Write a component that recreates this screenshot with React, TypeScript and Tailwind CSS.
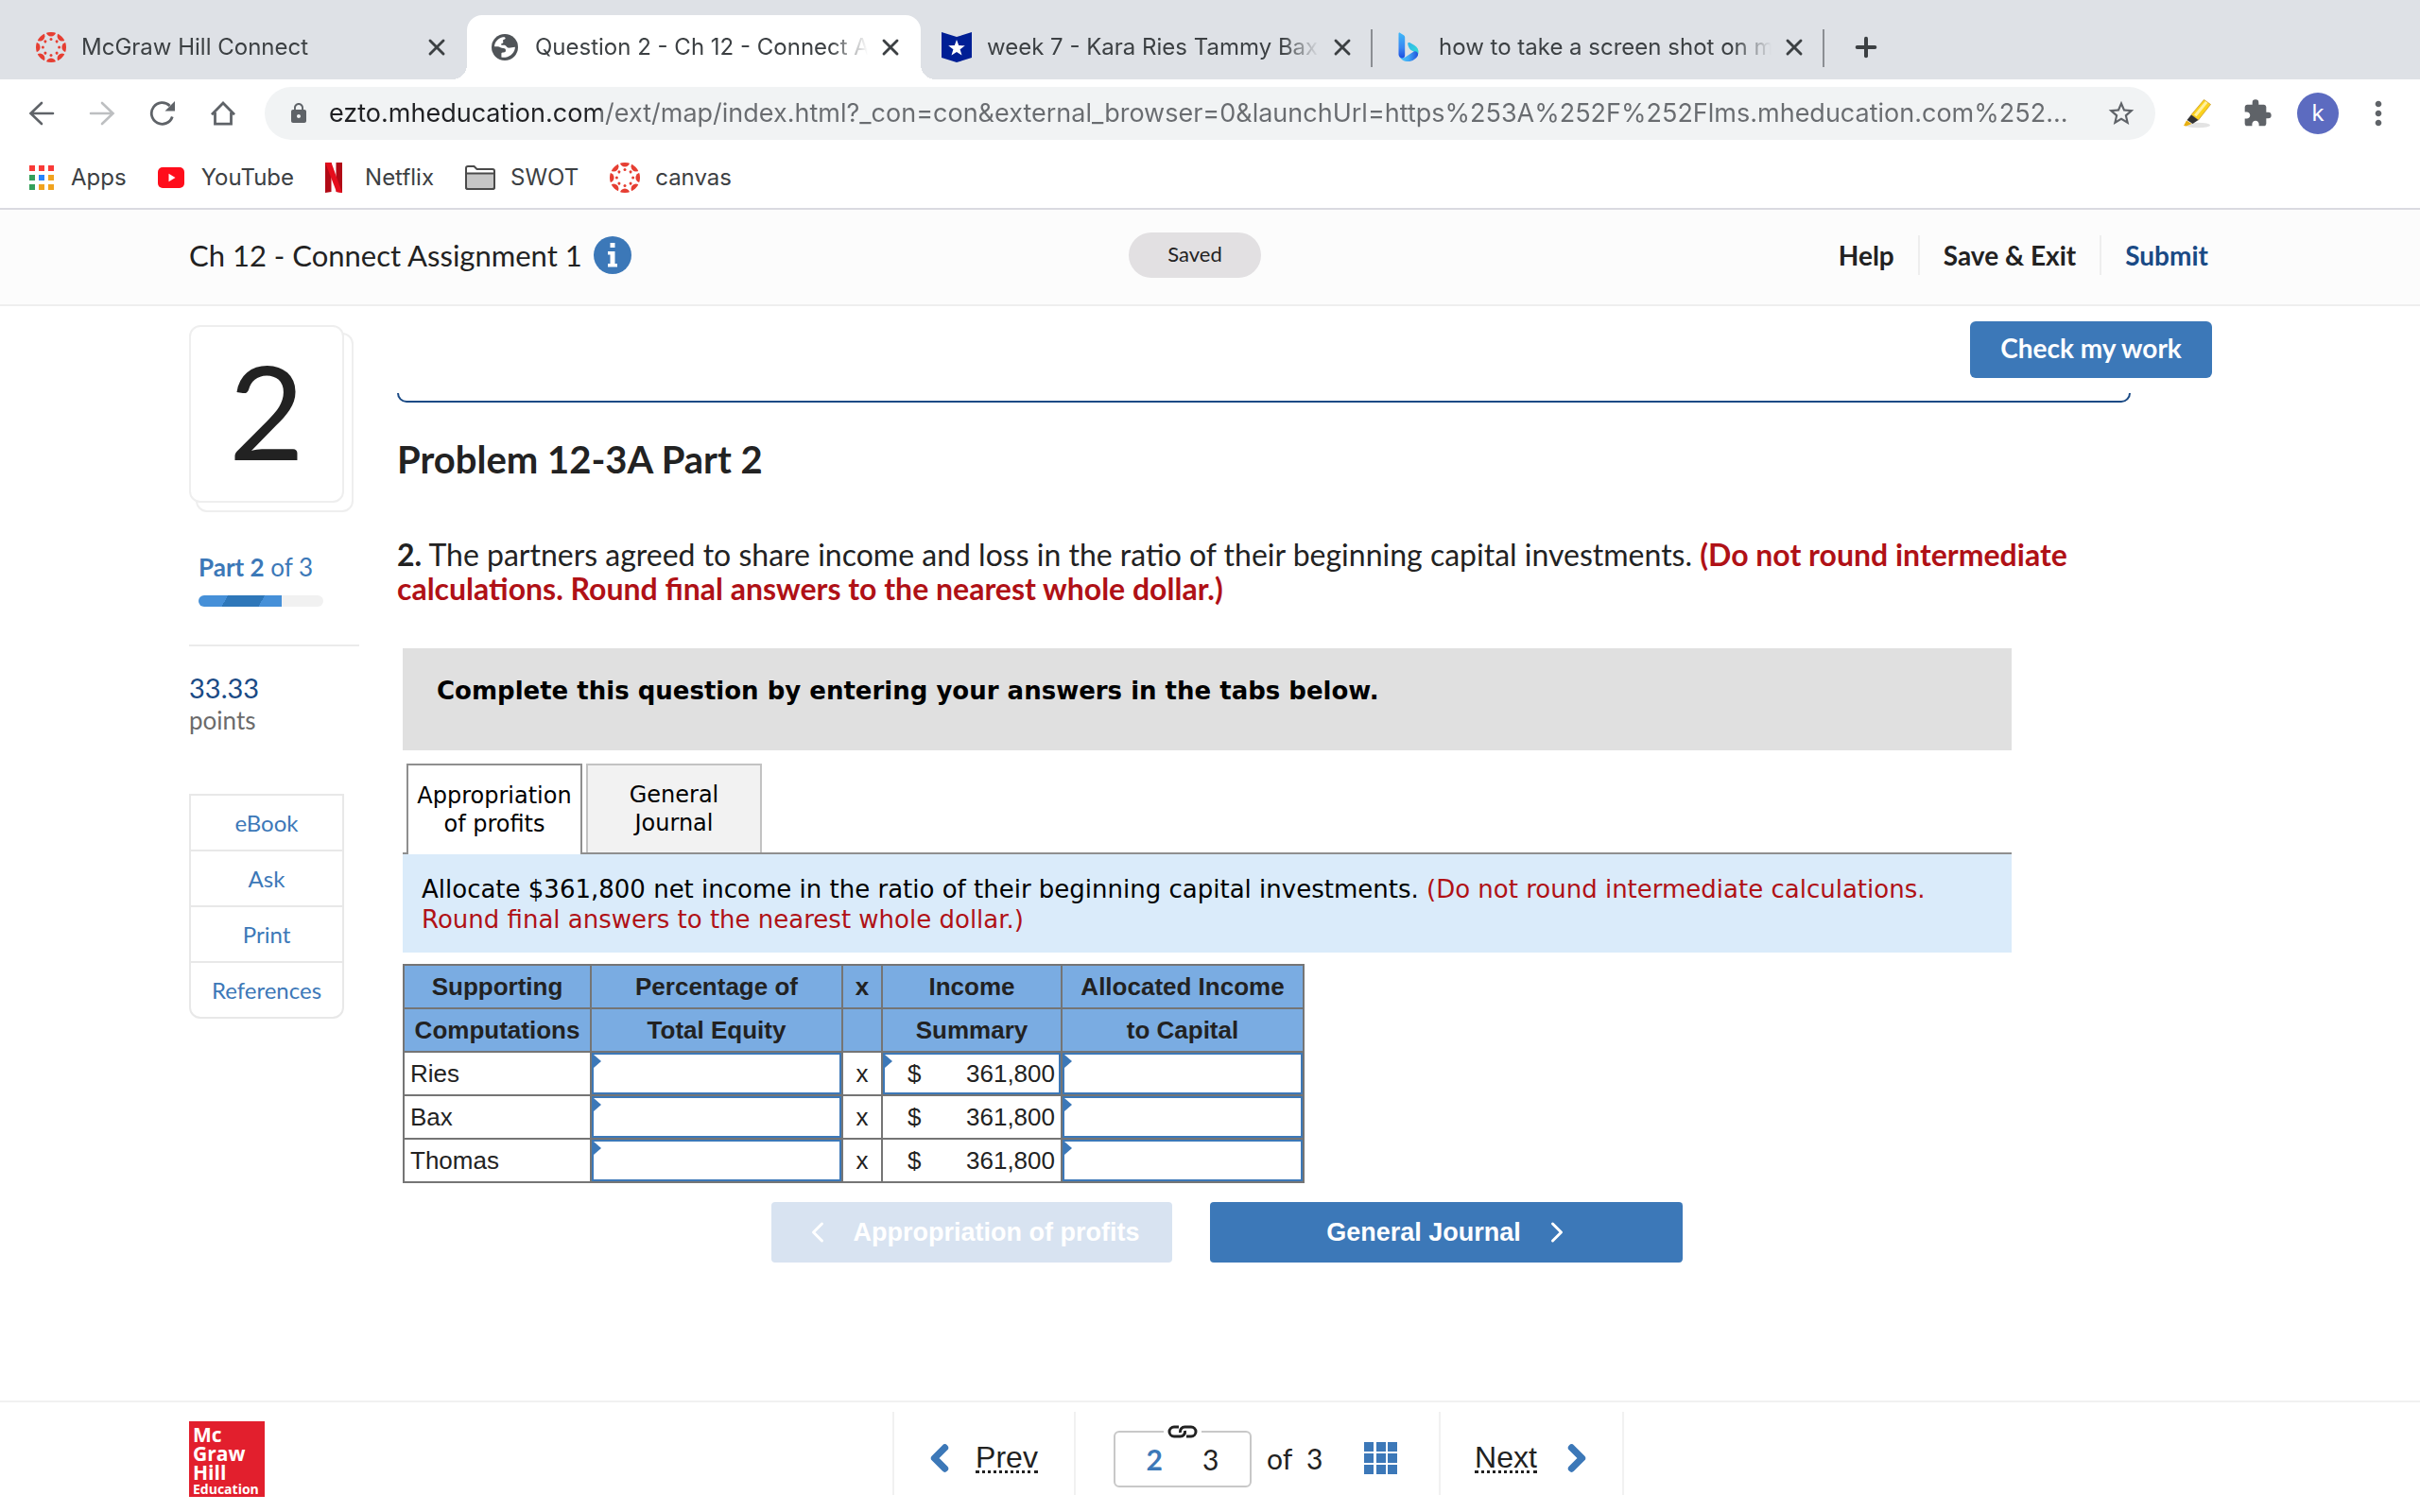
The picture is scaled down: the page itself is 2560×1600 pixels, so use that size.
import { ChevronLeft, ChevronRight, Plus, X } from 'lucide-react';
import { MdLock, MdMoreVert, MdStarBorder, MdExtension } from 'react-icons/md';

const angles = [0, 45, 90, 135, 180, 225, 270, 315];

function CanvasIcon() {
  return (
    <svg viewBox="0 0 32 32" className="size-8 shrink-0">
      <clipPath id="canvas-disc">
        <circle cx="16" cy="16" r="16" />
      </clipPath>
      <g fill="#e63e32" clipPath="url(#canvas-disc)">
        {angles.map((a) => (
          <g key={a} transform={`rotate(${a} 16 16)`}>
            <circle cx="16" cy="-0.6" r="5.2" />
            <circle cx="16" cy="7.4" r="1.5" />
          </g>
        ))}
      </g>
    </svg>
  );
}

function GlobeIcon() {
  return (
    <svg viewBox="0 0 28 28" className="size-7 shrink-0">
      <circle cx="14" cy="14" r="14" fill="#505458" />
      <path
        fill="#fff"
        d="M3 13.2C3.4 8.2 7.2 4.2 12 3.3c1.600-.3 3 .2 2.600 1.500-.4 1.100-2.600 1-2.600 2.300 0 1 .8 1.300.2 2.200-.5.8-2.100.6-2.100 1.600 0 .9 1.800.8 3.200.8 2.200 0 2.400 2.600 4.600 2.900 2 .2 4.300-.6 7-.8-.1 5.200-4.200 10-10.200 10.900-1.200.1-3.200.1-4.300-.3v-3.600c0-1.200 1-1.300 2.400-1.300 1.400 0 2.200-.8 2.200-2.200 0-1.500-1-2.200-2.600-2.200-2.400 0-3.600-1.900-6-1.900z"
      />
    </svg>
  );
}

function FlagIcon() {
  return (
    <svg viewBox="0 0 32 32" className="size-8 shrink-0">
      <path fill="#001f95" d="M0 0l16 5L32 0v27l-16 5L0 27z" />
      <path fill="#fff" d="M16 8l2.200 6.100 6.600.2-5.200 4 1.900 6.300-5.500-3.700-5.500 3.700 1.900-6.300-5.200-4 6.600-.2z" />
    </svg>
  );
}

function BingIcon() {
  return (
    <svg viewBox="0 0 22 32" className="h-8 w-[22px] shrink-0">
      <defs>
        <linearGradient id="bing-stem" x1="0" y1="0" x2="0" y2="1">
          <stop offset="0" stopColor="#3fb8f8" />
          <stop offset="0.6" stopColor="#3a86f2" />
          <stop offset="1" stopColor="#1b4de0" />
        </linearGradient>
        <linearGradient id="bing-base" x1="0" y1="0" x2="1" y2="0">
          <stop offset="0" stopColor="#4ccbfa" />
          <stop offset="0.5" stopColor="#3fa8f5" />
          <stop offset="1" stopColor="#2350dd" />
        </linearGradient>
        <linearGradient id="bing-wing" x1="0" y1="0" x2="1" y2="1">
          <stop offset="0" stopColor="#2fb4ee" />
          <stop offset="1" stopColor="#35e0cf" />
        </linearGradient>
      </defs>
      <path fill="url(#bing-wing)" d="M10.200 12.200c0-1.200 1-1.600 2-1.100l4.800 2.600c3.500 2 5 5 4.500 9l-1.500 3-1.600-4.200-5-2.600c-1.800-2-3-4.400-3.200-6.700z" />
      <path fill="url(#bing-base)" d="M1 24c1 2.500 4 4 6.500 2.600L17 20.300c2.600-.6 4.500 1.500 4 4C19.500 28.500 14 31.800 9 31c-4.500-.6-7.500-3.500-8-7z" />
      <path fill="url(#bing-stem)" d="M.5 1.700C.5.700 1.500.3 2.300.9L6 3.300c.8.500 1.200 1.200 1.200 2.200v19.300c0 1.600-1.200 2.600-2.800 2.600-2.300 0-3.900-1.800-3.900-4z" />
    </svg>
  );
}

function ReloadIcon() {
  return (
    <svg viewBox="0 0 28 28" className="size-7">
      <path d="M24.300 17.500A11.300 11.300 0 1 1 21.600 6" fill="none" stroke="#5f6368" strokeWidth="2.800" />
      <path d="M27 1v10.500H16.500z" fill="#5f6368" />
    </svg>
  );
}

function HomeIcon() {
  return (
    <svg viewBox="0 0 28 28" className="size-7" fill="none" stroke="#5f6368" strokeWidth="2.800">
      <path d="M2 15.200L14 3l12 12.200" />
      <path d="M5.500 13v12.200h17V13" />
    </svg>
  );
}

function ArrowIcon({ flip = false, color }: { flip?: boolean; color: string }) {
  return (
    <svg viewBox="0 0 28 28" className="size-7" fill="none" stroke={color} strokeWidth="2.600" strokeLinecap="round">
      {flip ? <path d="M2 14h23M14 3l11.500 11L14 25" /> : <path d="M26 14H3M14 3L2.500 14 14 25" />}
    </svg>
  );
}

function MarkerIcon() {
  return (
    <svg viewBox="0 0 32 32" className="size-8">
      <ellipse cx="17" cy="28.500" rx="13" ry="2.800" fill="#e3e3e3" />
      <path d="M10 17.500L23.500 1.500l7 5L17.500 23z" fill="#fbd21c" stroke="#c99b2a" strokeWidth="0.800" />
      <path d="M13 17.500L25 3l2.500 1.800L15.500 19.300z" fill="#fff0a0" />
      <path d="M10 17.500l7.500 5.500-6 4-6-4z" fill="#333" />
      <path d="M5 23.500l5.500 3.500-6 2.500L2 29z" fill="#e8b012" />
    </svg>
  );
}

function AppsIcon() {
  const colors = ['#f93a37', '#f93a37', '#f93a37', '#34a05a', '#2684fc', '#f0a31f', '#34a05a', '#f0a31f', '#f0a31f'];
  return (
    <span className="grid size-[26px] grid-cols-3 gap-1">
      {colors.map((c, i) => (
        <span key={i} style={{ background: c }} />
      ))}
    </span>
  );
}

function YouTubeIcon() {
  return (
    <svg viewBox="0 0 28 22" className="h-[22px] w-7">
      <rect width="28" height="22" rx="5" fill="#ff0d1b" />
      <path d="M11.500 6.800v8.400l7-4.200z" fill="#fff" />
    </svg>
  );
}

function NetflixIcon() {
  return (
    <svg viewBox="0 0 18 32" className="h-8 w-[18px]">
      <path d="M0 0h6.500v31L0 32zM11.500 0H18v32l-6.500-1z" fill="#b10a16" />
      <path d="M0 0h6.500L18 32l-6-1z" fill="#e50d1c" />
    </svg>
  );
}

function FolderIcon() {
  return (
    <svg viewBox="0 0 32 26" className="h-[26px] w-8" stroke="#4a4a4a" strokeWidth="2">
      <path d="M1 3a2 2 0 0 1 2-2h6.500l3 3H29a2 2 0 0 1 2 2v17a2 2 0 0 1-2 2H3a2 2 0 0 1-2-2z" fill="#fff" />
      <path d="M1 8.500h30V23a2 2 0 0 1-2 2H3a2 2 0 0 1-2-2z" fill="#c6c6c6" />
    </svg>
  );
}

function LinkIcon() {
  return (
    <svg viewBox="0 0 32 14" className="h-3.5 w-8" fill="none" stroke="#222" strokeWidth="3">
      <path d="M12 2H7a5 5 0 0 0 0 10h6.500A5 5 0 0 0 18.500 6" />
      <path d="M20 12h5a5 5 0 0 0 0-10h-6.500a5 5 0 0 0-5 6" />
    </svg>
  );
}

interface TabProps {
  icon: React.ReactNode;
  title: string;
  active?: boolean;
  divider?: boolean;
}

function BrowserTab({ icon, title, active, divider }: TabProps) {
  return (
    <div
      className={
        active
          ? 'relative flex h-[68px] w-[480px] items-center rounded-t-2xl bg-white pr-5 pl-6'
          : 'relative flex h-[68px] w-[478px] items-center pr-5 pl-[22px]'
      }
    >
      {active && (
        <>
          <span className="absolute bottom-0 -left-4 size-4 bg-[radial-gradient(circle_at_0_0,transparent_16px,white_16px)]" />
          <span className="absolute -right-4 bottom-0 size-4 bg-[radial-gradient(circle_at_100%_0,transparent_16px,white_16px)]" />
        </>
      )}
      <span className="flex w-8 shrink-0 justify-center">{icon}</span>
      <span className="ml-4 flex-1 overflow-hidden text-2xl whitespace-nowrap text-[#3c4043] [mask-image:linear-gradient(90deg,black_calc(100%-40px),transparent)]">
        {title}
      </span>
      <button aria-label="Close tab" className="ml-3 flex size-6 items-center justify-center text-[#3c4043]">
        <X className="size-7 shrink-0" strokeWidth={2.5} />
      </button>
      {divider && <span className="absolute top-[15px] right-0 h-10 w-0.5 bg-[#8b8e93]" />}
    </div>
  );
}

const bookmarks = [
  { name: 'Apps', icon: <AppsIcon />, gap: 'gap-[18px]' },
  { name: 'YouTube', icon: <YouTubeIcon />, gap: 'gap-[18px]' },
  { name: 'Netflix', icon: <NetflixIcon />, gap: 'gap-6' },
  { name: 'SWOT', icon: <FolderIcon />, gap: 'gap-4' },
  { name: 'canvas', icon: <CanvasIcon />, gap: 'gap-4' },
];

function BrowserChrome() {
  return (
    <div className="border-b-2 border-[#dadae0] bg-white font-['Inter',sans-serif]">
      <div className="flex h-[84px] items-end bg-[#dee1e6] pl-4">
        <BrowserTab icon={<CanvasIcon />} title="McGraw Hill Connect" />
        <BrowserTab icon={<GlobeIcon />} title="Question 2 - Ch 12 - Connect A" active />
        <BrowserTab icon={<FlagIcon />} title="week 7 - Kara Ries Tammy Bax" divider />
        <BrowserTab icon={<BingIcon />} title="how to take a screen shot on m" divider />
        <button aria-label="New tab" className="ml-7 flex h-[68px] items-center text-[#3c4043]">
          <Plus className="size-8" strokeWidth={3} />
        </button>
      </div>
      <div className="flex h-[72px] items-center pr-6 pl-[30px]">
        <div className="flex gap-9">
          <button aria-label="Back"><ArrowIcon color="#5f6368" /></button>
          <button aria-label="Forward"><ArrowIcon flip color="#bdbfc1" /></button>
          <button aria-label="Reload"><ReloadIcon /></button>
          <button aria-label="Home"><HomeIcon /></button>
        </div>
        <div className="ml-[30px] flex h-14 flex-1 items-center rounded-full bg-[#f1f3f4] pr-5 pl-6">
          <MdLock className="size-6 text-[#5f6368]" />
          <input
            aria-label="Address"
            readOnly
            defaultValue="ezto.mheducation.com/ext/map/index.html?_con=con&external_browser=0&launchUrl=https%253A%252F%252Flms.mheducation.com%252..."
            className="ml-5 min-w-0 flex-1 bg-[linear-gradient(90deg,#202124_288px,#696c70_288px)] bg-clip-text text-[27px] text-transparent outline-none"
          />
          <button aria-label="Bookmark this page"><MdStarBorder className="size-8 text-[#5f6368]" /></button>
        </div>
        <div className="ml-7 flex items-center">
          <MarkerIcon />
          <MdExtension className="ml-8 size-8 text-[#5f6368]" />
          <span className="ml-[26px] flex size-11 items-center justify-center rounded-full bg-[#5c6bc0] text-2xl text-white">k</span>
          <button aria-label="Menu" className="ml-[22px]"><MdMoreVert className="size-10 text-[#5f6368]" /></button>
        </div>
      </div>
      <nav className="flex h-16 items-center gap-[33px] pl-[31px] text-2xl text-[#3c4043]">
        {bookmarks.map((b) => (
          <a key={b.name} href="#" className={`flex items-center ${b.gap}`}>
            {b.icon}
            {b.name}
          </a>
        ))}
      </nav>
    </div>
  );
}

function AssignmentHeader() {
  return (
    <header className="grid h-[102px] grid-cols-[1fr_auto_1fr] items-center border-b-2 border-[#eeeeee] bg-[#fcfcfc] pr-[232px] pb-1 pl-[200px]">
      <div className="flex items-center gap-3">
        <h1 className="text-[31px] text-[#222]">Ch 12 - Connect Assignment 1</h1>
        <button aria-label="Assignment information" className="flex size-10 items-center justify-center rounded-full bg-[#3c78b8]">
          <svg viewBox="0 0 12 26" className="h-[26px] w-3" fill="#fff">
            <path d="M3.500 0h5v5h-5zM1 9h7.500v13H11v3.500H1V22h2.500v-9.500H1z" />
          </svg>
        </button>
      </div>
      <span className="flex h-12 w-[140px] items-center justify-center rounded-full bg-[#e2e0e2] pb-1 text-[22px] text-[#222]">Saved</span>
      <div className="-mr-2 flex items-center justify-end text-[28px] font-bold text-[#222]">
        <a href="#">Help</a>
        <a href="#" className="mx-[25px] border-x-2 border-[#eeeeee] px-[25px]">Save &amp; Exit</a>
        <a href="#" className="text-[#1a4a85]">Submit</a>
      </div>
    </header>
  );
}

function Sidebar() {
  return (
    <aside className="w-[180px] shrink-0">
      <div className="relative mt-5 h-[198px] w-[174px]">
        <span className="absolute right-0 bottom-0 h-[190px] w-[167px] rounded-xl border-2 border-[#eeeeee] bg-white" />
        <div className="relative flex h-[188px] w-[164px] items-center justify-center rounded-xl border-2 border-[#eeeeee] bg-white pb-2 text-[138px] leading-[160px] text-[#222]">
          2
        </div>
      </div>
      <div className="ml-2.5 pt-[42px] text-[26px] leading-8 text-[#3c78b8]">
        <b>Part 2</b> of 3
        <div className="mt-3.5 h-3 w-[132px] overflow-hidden rounded-full bg-[#f1f1f1]">
          <div className="h-3 w-[88px] bg-[linear-gradient(120deg,#4690d8_33%,#2e77b9_33%,#2e77b9_74%,#4690d8_74%)]" />
        </div>
      </div>
      <hr className="mt-10 border-t-2 border-[#ebebeb]" />
      <div className="mt-[26px] text-[29px] leading-9 text-[#1a4a85]">33.33</div>
      <div className="text-[26px] leading-8 text-[#6b6b6b]">points</div>
      <ul className="mt-[62px] w-[164px] divide-y-2 divide-[#e8e8e8] rounded-b-xl border-2 border-[#e8e8e8] text-center text-2xl text-[#3c78b8]">
        {['eBook', 'Ask', 'Print', 'References'].map((name) => (
          <li key={name}>
            <a href="#" className="flex h-[57px] items-center justify-center">{name}</a>
          </li>
        ))}
      </ul>
    </aside>
  );
}

function AnswerInput({ label }: { label: string }) {
  return (
    <td className="relative border-2 border-[#757575] p-0">
      <span className="absolute top-0.5 left-0.5 h-3.5 w-2 bg-[#3c78b8] [clip-path:polygon(0_0,100%_50%,0_100%)]" />
      <input aria-label={label} className="block h-11 w-full border-2 border-[#3c78b8] bg-white px-2 outline-none" />
    </td>
  );
}

function AllocationTable() {
  const head = 'h-[46px] border-2 border-[#757575] p-0 font-bold';
  const cell = 'h-[46px] border-2 border-[#757575] p-0';
  return (
    <table className="mt-3 w-[954px] table-fixed border-collapse font-['Liberation_Sans',Arial,sans-serif] text-[26px] leading-8 text-[#222]">
      <colgroup>
        <col className="w-[198px]" />
        <col className="w-[266px]" />
        <col className="w-[42px]" />
        <col className="w-[190px]" />
        <col />
      </colgroup>
      <thead className="bg-[#7aace2]">
        <tr>
          <th className={head}>Supporting</th>
          <th className={head}>Percentage of</th>
          <th className={head}>x</th>
          <th className={head}>Income</th>
          <th className={head}>Allocated Income</th>
        </tr>
        <tr>
          <th className={head}>Computations</th>
          <th className={head}>Total Equity</th>
          <th className={head} />
          <th className={head}>Summary</th>
          <th className={head}>to Capital</th>
        </tr>
      </thead>
      <tbody>
        {['Ries', 'Bax', 'Thomas'].map((partner, i) => (
          <tr key={partner}>
            <td className={`${cell} pl-1.5`}>{partner}</td>
            <AnswerInput label={`${partner} percentage of total equity`} />
            <td className={`${cell} text-center`}>x</td>
            {i === 0 ? (
              <td className="relative border-2 border-[#757575] p-0">
                <span className="absolute top-0.5 left-0.5 h-3.5 w-2 bg-[#3c78b8] [clip-path:polygon(0_0,100%_50%,0_100%)]" />
                <label className="flex h-11 items-center border-2 border-[#3c78b8] pr-1 pl-6">
                  $
                  <input aria-label="Ries income summary" defaultValue="361,800" className="w-full min-w-0 text-right outline-none" />
                </label>
              </td>
            ) : (
              <td className={cell}>
                <div className="flex justify-between pr-1.5 pl-[26px]">
                  <span>$</span>
                  <span>361,800</span>
                </div>
              </td>
            )}
            <AnswerInput label={`${partner} allocated income to capital`} />
          </tr>
        ))}
      </tbody>
    </table>
  );
}

function Question() {
  return (
    <section className="ml-10 min-w-0 flex-1">
      <div className="flex h-[76px] justify-end pt-4">
        <button className="h-[60px] w-64 rounded-md bg-[#3c78b8] pb-1 text-[28px] font-bold text-white">Check my work</button>
      </div>
      <div className="mt-4 mr-[86px] h-2.5 rounded-b-[10px] border-2 border-t-0 border-[#1a4a85]" />
      <h2 className="mt-9 text-[40px] leading-[48px] font-bold text-[#222]">Problem 12-3A Part 2</h2>
      <p className="mt-[59px] mr-[86px] text-[32px] leading-9 text-[#222]">
        <b>2.</b> The partners agreed to share income and loss in the ratio of their beginning capital investments.{' '}
        <b className="text-[#b01116]">
          (Do not round intermediate calculations. Round final answers to the nearest whole dollar.)
        </b>
      </p>

      <div className="mt-[45px] mr-[212px] ml-1.5 font-['DejaVu_Sans',Verdana,sans-serif] text-black">
        <div className="h-[108px] bg-[#e0e0e0] px-9 pt-[29px] text-[26px] leading-8 font-bold">
          Complete this question by entering your answers in the tabs below.
        </div>
        <div className="mt-3.5 flex h-24 gap-1 border-b-2 border-[#8f8f8f] pl-1 text-2xl leading-[30px]" role="tablist">
          <button role="tab" aria-selected="true" className="-mb-0.5 h-24 w-[186px] border-2 border-b-0 border-[#8f8f8f] bg-white">
            Appropriation of profits
          </button>
          <button role="tab" aria-selected="false" className="h-[94px] w-[186px] border-2 border-b-0 border-[#c2c2c2] bg-[#f2f2f2] px-8">
            General Journal
          </button>
        </div>
        <p className="h-26 bg-[#daebfa] px-5 pt-[21px] text-[26px] leading-8">
          Allocate $361,800 net income in the ratio of their beginning capital investments.{' '}
          <span className="text-[#b01116]">
            (Do not round intermediate calculations. Round final answers to the nearest whole dollar.)
          </span>
        </p>
        <AllocationTable />
        <div className="mt-5 ml-[390px] flex gap-10 font-['Liberation_Sans',Arial,sans-serif] text-[27px] font-bold text-white">
          <button disabled className="flex h-16 w-[424px] items-center justify-center gap-5 rounded bg-[#d8e3f1] pr-1">
            <ChevronLeft className="size-9" strokeWidth={2} />
            Appropriation of profits
          </button>
          <button className="flex h-16 w-[500px] items-center justify-center gap-5 rounded bg-[#3c78b8] pl-2">
            General Journal
            <ChevronRight className="size-9" strokeWidth={2} />
          </button>
        </div>
      </div>
    </section>
  );
}

function Footer() {
  return (
    <footer className="grid h-[118px] grid-cols-[1fr_auto_1fr] border-t-2 border-[#f1f1f1] pt-2.5 pr-[98px] pl-[200px] text-[#222]">
      <div className="mt-2.5 size-20 bg-[#e21f2d] pt-1 pl-1 font-['Open_Sans',sans-serif] text-[21px] leading-5 font-bold text-white">
        Mc
        <br />
        Graw
        <br />
        Hill
        <div className="text-[14px] leading-4">Education</div>
      </div>
      <nav className="flex h-[88px] divide-x-2 divide-[#f1f1f1] border-x-2 border-[#f1f1f1]">
        <a href="#" className="flex w-48 items-center justify-center gap-4 pt-2.5 pr-3 font-['Liberation_Sans',Arial,sans-serif] text-[32px]">
          <ChevronLeft className="size-11 text-[#3c78b8]" strokeWidth={4} />
          <span className="border-b-3 border-dotted border-[#222] leading-7">Prev</span>
        </a>
        <div className="flex w-[386px] items-center pl-10 text-[30px]">
          <div className="relative mt-3 flex h-[60px] w-[146px] items-center justify-center gap-[42px] rounded-md border-2 border-[#c8c8c8]">
            <span className="absolute -top-2 bg-white px-1"><LinkIcon /></span>
            <b className="text-[#3c78b8]">2</b>
            <span>3</span>
          </div>
          <span className="mt-2.5 ml-4">of&nbsp; 3</span>
          <button aria-label="Question list" className="mt-2.5 ml-11 grid size-[35px] grid-cols-3 gap-0.5">
            {Array.from({ length: 9 }, (_, i) => (
              <span key={i} className="size-2.5 bg-[#3c78b8]" />
            ))}
          </button>
        </div>
        <a href="#" className="flex w-48 items-center justify-center gap-5 pt-2.5 pl-2.5 font-['Liberation_Sans',Arial,sans-serif] text-[32px]">
          <span className="border-b-3 border-dotted border-[#222] leading-7">Next</span>
          <ChevronRight className="size-11 text-[#3c78b8]" strokeWidth={4} />
        </a>
      </nav>
    </footer>
  );
}

export default function App() {
  return (
    <div className="flex min-h-screen flex-col bg-white font-['Lato',sans-serif]">
      <BrowserChrome />
      <AssignmentHeader />
      <main className="flex flex-1 pr-[220px] pl-[200px]">
        <Sidebar />
        <Question />
      </main>
      <Footer />
    </div>
  );
}
